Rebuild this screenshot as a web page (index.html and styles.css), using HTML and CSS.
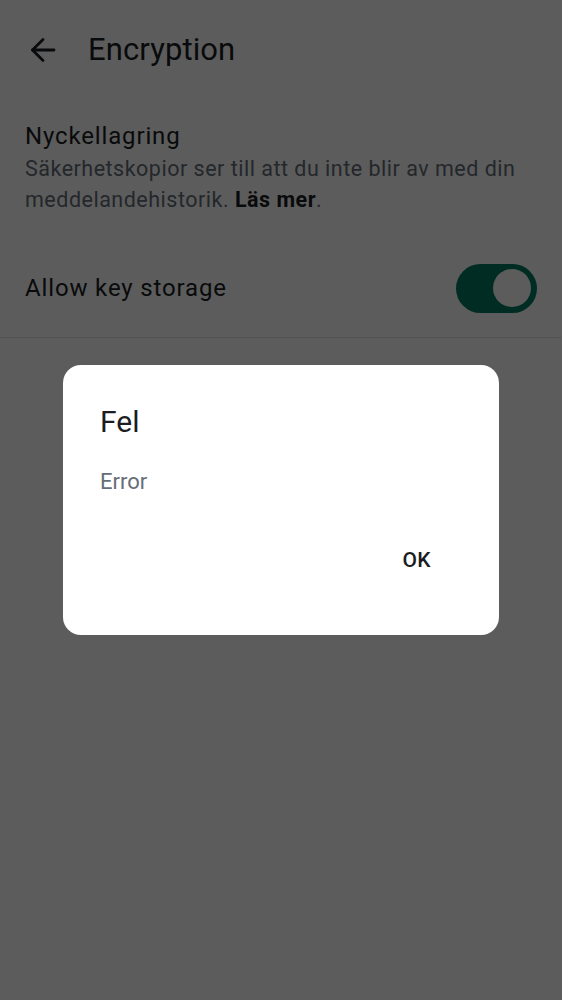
FILE: index.html
```html
<!DOCTYPE html>
<html lang="sv">
<head>
<meta charset="utf-8">
<title>Encryption</title>
<link rel="stylesheet" href="styles.css">
</head>
<body>
<div class="app">
  <header class="topbar">
    <button class="back" aria-label="Back">
      <svg width="26" height="26" viewBox="0 0 26 26" fill="none" stroke="currentColor" stroke-width="2.8" stroke-linecap="round" stroke-linejoin="round">
        <path d="M24 13H2.5"/>
        <path d="M13 2.5L2.5 13L13 23.5"/>
      </svg>
    </button>
    <h1 class="title">Encryption</h1>
  </header>
  <section class="pref">
    <div class="pref-title">Nyckellagring</div>
    <p class="pref-desc">Säkerhetskopior ser till att du inte blir av med din meddelandehistorik. <b class="link">Läs mer</b>.</p>
  </section>
  <div class="row">
    <span class="row-label">Allow key storage</span>
    <span class="switch"><span class="thumb"></span></span>
  </div>
  <div class="divider"></div>
</div>
<div class="scrim">
  <div class="dialog" role="alertdialog">
    <h2 class="dialog-title">Fel</h2>
    <p class="dialog-text">Error</p>
    <div class="actions">
      <button class="ok">OK</button>
    </div>
  </div>
</div>
</body>
</html>
```
FILE: styles.css
```css
* { box-sizing: border-box; }
html, body { margin: 0; padding: 0; }
body {
  background: #ffffff;
  font-family: "Roboto", "Liberation Sans", sans-serif;
  color: #1b1d22;
  width: 562px;
  height: 1000px;
  overflow: hidden;
}
.app { display: flex; flex-direction: column; }
.topbar {
  height: 100px;
  display: flex;
  align-items: center;
  padding-left: 30px;
}
.back {
  border: 0;
  background: none;
  padding: 0;
  width: 26px;
  height: 26px;
  color: #1b1d22;
  display: flex;
}
.title {
  margin: 0 0 0 32px;
  font-size: 31px;
  font-weight: 400;
  line-height: 40px;
  letter-spacing: 0.1px;
}
.pref { padding: 20px 25px 24px; }
.pref-title {
  font-size: 24px;
  line-height: 32px;
  letter-spacing: 0.85px;
}
.pref-desc {
  margin: 1px 0 0;
  font-size: 21.5px;
  line-height: 31px;
  letter-spacing: 0.5px;
  color: #656d77;
}
.link { color: #1b1d22; font-weight: 700; }
.row {
  height: 98px;
  display: flex;
  align-items: center;
  justify-content: space-between;
  padding: 0 25px;
}
.row-label { font-size: 24px; letter-spacing: 0.85px; }
.switch {
  width: 81px;
  height: 49px;
  border-radius: 25px;
  background: #007a61;
  display: flex;
  align-items: center;
  justify-content: flex-end;
  padding-right: 6px;
}
.thumb {
  width: 38px;
  height: 38px;
  border-radius: 50%;
  background: #ffffff;
}
.divider { height: 1px; background: #e1e6ec; }
.scrim {
  position: fixed;
  inset: 0;
  background: rgba(0, 0, 0, 0.64);
  display: flex;
  align-items: center;
  justify-content: center;
}
.dialog {
  width: 436px;
  height: 270px;
  background: #ffffff;
  border-radius: 18px;
  padding: 38px 38px 0 37px;
  display: flex;
  flex-direction: column;
}
.dialog-title {
  margin: 0;
  font-size: 30px;
  font-weight: 400;
  line-height: 38px;
  color: #1b1d22;
}
.dialog-text {
  margin: 26px 0 0;
  font-size: 22px;
  line-height: 30px;
  color: #656d77;
}
.actions {
  display: flex;
  justify-content: flex-end;
  margin-top: 33px;
}
.ok {
  border: 0;
  background: none;
  font-family: inherit;
  font-size: 21px;
  font-weight: 500;
  letter-spacing: 0.4px;
  line-height: 30px;
  padding: 15px 30px;
  color: #1b1d22;
}
```
